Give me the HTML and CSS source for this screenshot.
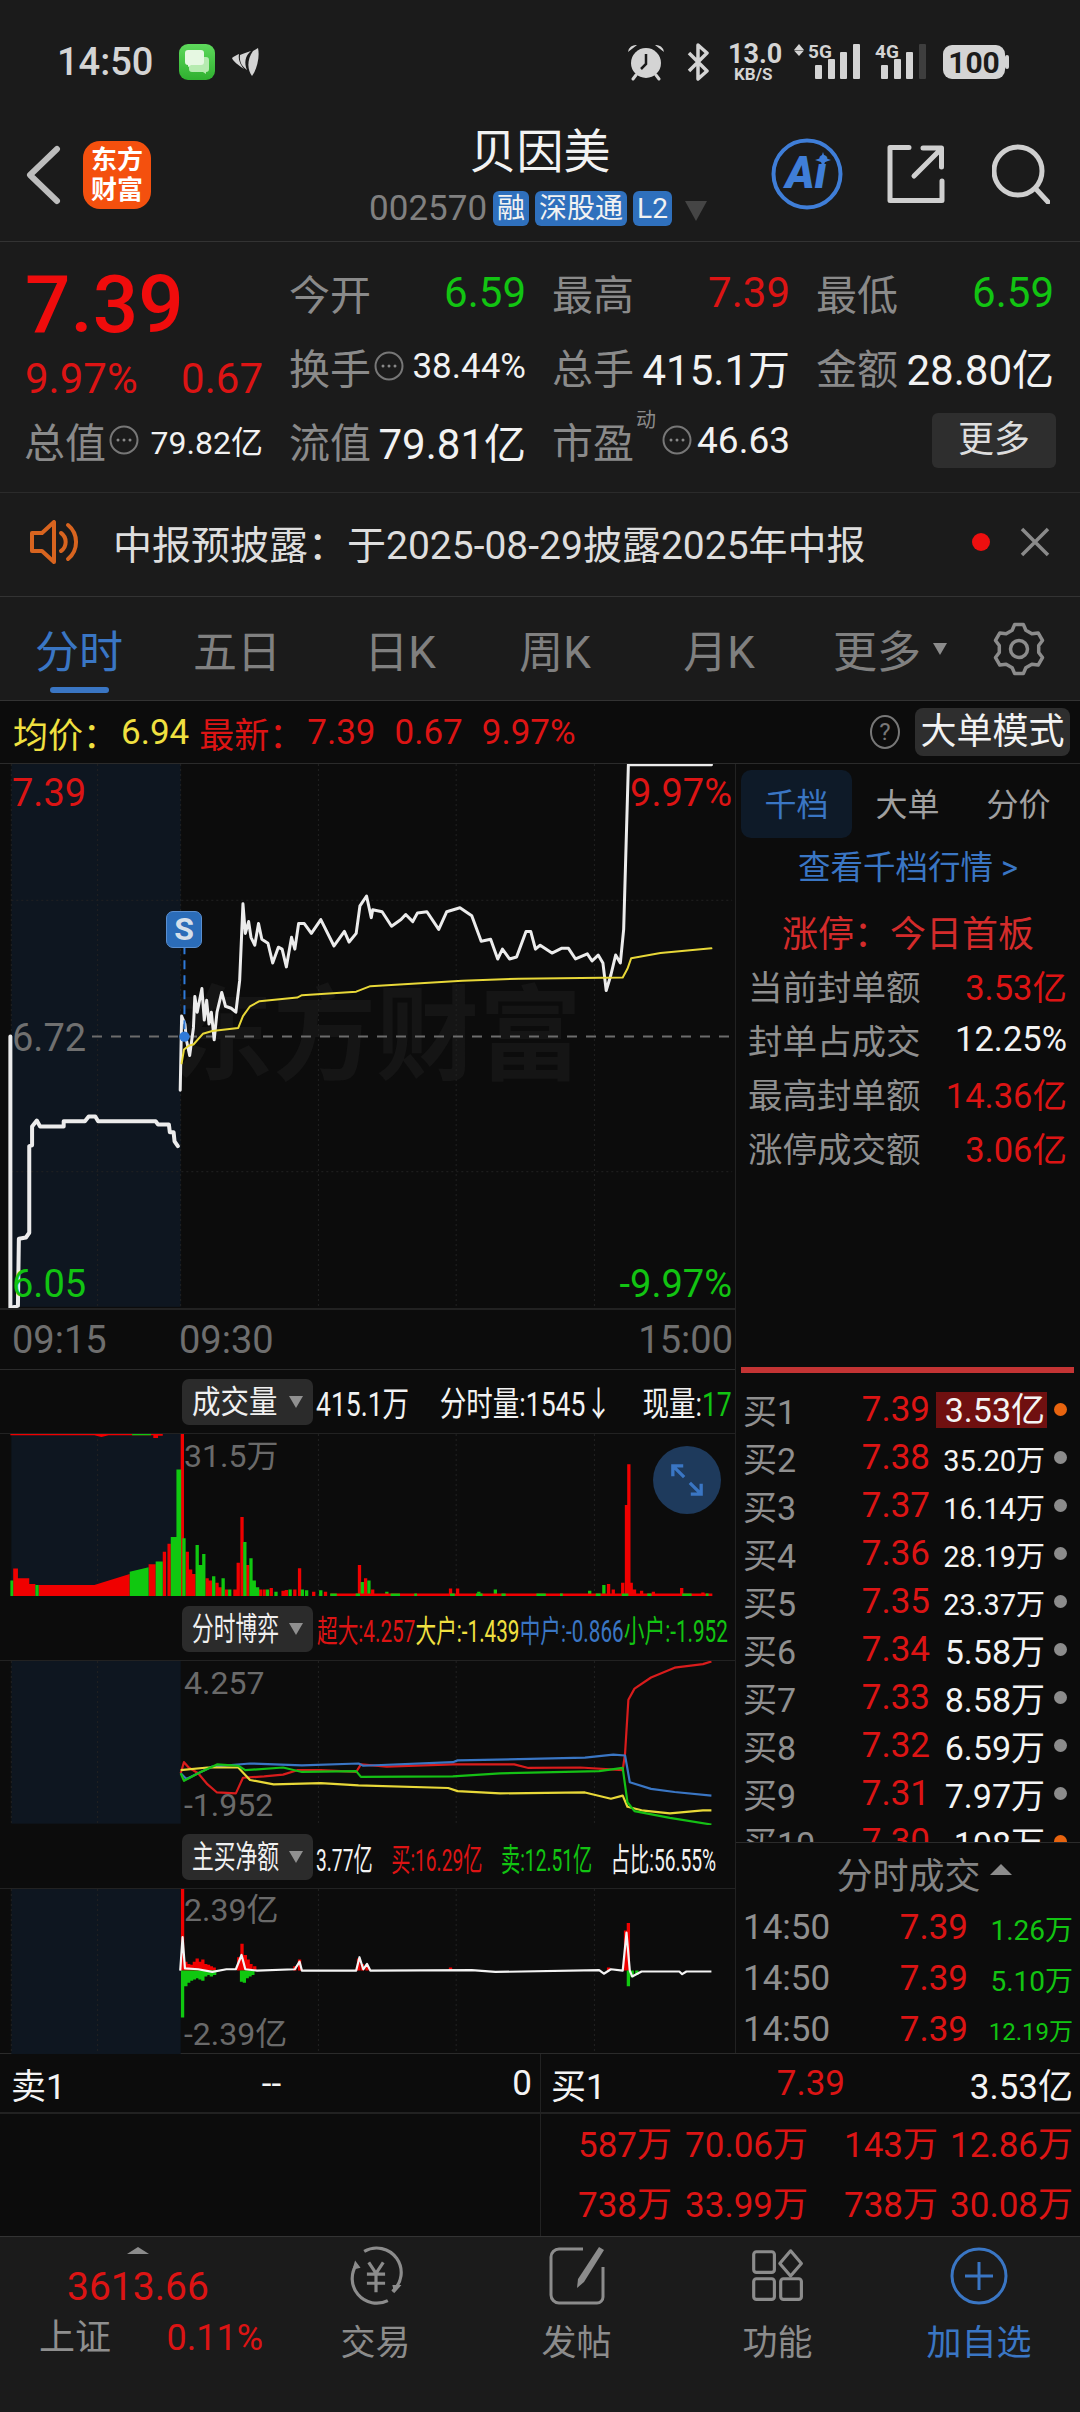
FILE: index.html
```html
<!DOCTYPE html>
<html lang="zh">
<head>
<meta charset="utf-8">
<title>贝因美</title>
<link rel="stylesheet" href="styles.css">
</head>
<body>
<div class="page">

<div class="status">
  <span class="clock">14:50</span>
  <svg class="ic-msg" viewBox="0 0 36 36"><defs><linearGradient id="g1" x1="0" y1="0" x2="0" y2="1"><stop offset="0" stop-color="#5ed95c"/><stop offset="1" stop-color="#2fb02f"/></linearGradient></defs><rect width="36" height="36" rx="9" fill="url(#g1)"/><path d="M13 13h14a3 3 0 0 1 3 3v9a3 3 0 0 1-3 3v2l-3-2H13a3 3 0 0 1-3-3v-9a3 3 0 0 1 3-3z" fill="#b6ebb0"/><path d="M9 6h13a3 3 0 0 1 3 3v9a3 3 0 0 1-3 3H12l-3 2v-2a3 3 0 0 1-3-3V9a3 3 0 0 1 3-3z" fill="#e6f8e2"/></svg>
  <svg class="ic-leaf" viewBox="0 0 27 30"><path d="M26 1C28 10 25 22 20 29 16 24 14 14 21 4z" fill="#d4d4d4"/><path d="M19 4C13 9 12 16 15 23 11 20 7 16 8 8 11 7 15 5 19 4z" fill="#d4d4d4"/><path d="M7 7C5 8 2 9 0 11 1 14 6 18 12 22 8 17 6 12 7 7z" fill="#d4d4d4"/></svg>
  <div class="status-right">
    <svg class="st-alarm" viewBox="0 0 59 38"><g fill="none" stroke="#d4d4d4" stroke-linecap="round"><path d="M6 36l3-4M32 36l-3-4" stroke-width="3"/></g><circle cx="19" cy="20" r="15" fill="#d4d4d4"/><path d="M19 11v10l-5 5" fill="none" stroke="#1b1b1b" stroke-width="2.500"/><path d="M1 9a8 8 0 0 1 9-7zM37 9a8 8 0 0 0-9-7z" fill="#d4d4d4"/></svg>
    <svg class="st-bt" viewBox="0 0 42 38"><path d="M3 10l18 18-9 8V2l9 8L3 28" fill="none" stroke="#d4d4d4" stroke-width="3.500" stroke-linejoin="round"/></svg>
    <svg class="st-net" viewBox="0 -8 66 54"><text x="0" y="20" class="t-net1">13.0</text><text x="6" y="37" class="t-net2">KB/S</text></svg>
    <svg class="st-s5" viewBox="0 -3 81 44"><path d="M5 1l5 6H0zM5 13L0 7.500h10z" fill="#d4d4d4"/><text x="14" y="15" class="t-sig">5G</text><g fill="#d4d4d4"><rect x="21" y="22" width="7" height="14" rx="1"/><rect x="34" y="16" width="7" height="20" rx="1"/><rect x="46" y="9" width="7" height="27" rx="1"/><rect x="59" y="1" width="7" height="35" rx="1"/></g></svg>
    <svg class="st-s4" viewBox="0 -3 68 44"><text x="0" y="15" class="t-sig">4G</text><g fill="#d4d4d4"><rect x="6" y="22" width="7" height="14" rx="1"/><rect x="19" y="16" width="7" height="20" rx="1"/><rect x="31" y="9" width="7" height="27" rx="1"/></g><rect x="44" y="1" width="7" height="35" rx="1" fill="#3e3e3e"/></svg>
    <svg class="st-batt" viewBox="0 0 66 36"><rect width="62" height="34" y="1" rx="9" fill="#d4d4d4"/><rect x="62" y="11" width="4" height="14" rx="2" fill="#d4d4d4"/><text x="31" y="29" class="t-batt">100</text></svg>
  </div>
</div>

<header class="header">
  <div class="header-left">
    <svg class="ic-back" viewBox="0 0 36 60"><path d="M32 4L5 30l27 26" fill="none" stroke="#bdbdbd" stroke-width="6" stroke-linecap="round" stroke-linejoin="round"/></svg>
    <div class="logo"><span>东方</span><span>财富</span></div>
  </div>
  <div class="title-block">
    <div class="title">贝因美</div>
    <div class="code-row">
      <span class="code">002570</span><span class="tag">融</span><span class="tag">深股通</span><span class="tag">L2</span><span class="code-tri"></span>
    </div>
  </div>
  <div class="header-right">
    <svg class="ic-ai" viewBox="0 0 72 72"><circle cx="36" cy="36" r="33.500" fill="none" stroke="#3f7ed8" stroke-width="4"/><text x="35" y="50" class="t-ai">Ai</text><path d="M52 14l2 6 6 2-6 2-2 6-2-6-6-2 6-2z" fill="#3f7ed8"/></svg>
    <svg class="ic-share" viewBox="0 0 58 58"><path d="M22 2.500H3v53h52V36M27 31L54 4M36 3h18.500v19" fill="none" stroke="#cfcfcf" stroke-width="5" stroke-linecap="round" stroke-linejoin="round"/></svg>
    <svg class="ic-search" viewBox="0 0 58 60"><circle cx="26" cy="27" r="24" fill="none" stroke="#cfcfcf" stroke-width="5"/><path d="M44 45l12 13" stroke="#cfcfcf" stroke-width="5" stroke-linecap="round"/></svg>
  </div>
</header>

<section class="quote">
  <div class="cell big-cell"><span class="big">7.39</span></div>
  <div class="cell"><span class="lab">今开</span><span class="val grn">6.59</span></div>
  <div class="cell"><span class="lab">最高</span><span class="val red">7.39</span></div>
  <div class="cell"><span class="lab">最低</span><span class="val grn">6.59</span></div>

  <div class="cell low-cell"><span class="val red">9.97%</span><span class="val red">0.67</span></div>
  <div class="cell"><span class="lab-wrap"><span class="lab">换手</span><svg class="dots" viewBox="0 0 30 30"><circle cx="15" cy="15" r="13.500" fill="none" stroke="#777" stroke-width="2"/><circle cx="9" cy="15" r="1.500" fill="#888"/><circle cx="15" cy="15" r="1.500" fill="#888"/><circle cx="21" cy="15" r="1.500" fill="#888"/></svg></span><span class="val wht s35">38.44%</span></div>
  <div class="cell"><span class="lab">总手</span><span class="val wht">415.1万</span></div>
  <div class="cell"><span class="lab">金额</span><span class="val wht">28.80亿</span></div>

  <div class="cell"><span class="lab-wrap"><span class="lab">总值</span><svg class="dots" viewBox="0 0 30 30"><circle cx="15" cy="15" r="13.500" fill="none" stroke="#777" stroke-width="2"/><circle cx="9" cy="15" r="1.500" fill="#888"/><circle cx="15" cy="15" r="1.500" fill="#888"/><circle cx="21" cy="15" r="1.500" fill="#888"/></svg></span><span class="val wht s32">79.82亿</span></div>
  <div class="cell"><span class="lab">流值</span><span class="val wht">79.81亿</span></div>
  <div class="cell"><span class="lab-wrap"><span class="lab">市盈</span><sup class="dong">动</sup><svg class="dots" viewBox="0 0 30 30"><circle cx="15" cy="15" r="13.500" fill="none" stroke="#777" stroke-width="2"/><circle cx="9" cy="15" r="1.500" fill="#888"/><circle cx="15" cy="15" r="1.500" fill="#888"/><circle cx="21" cy="15" r="1.500" fill="#888"/></svg></span><span class="val wht s37">46.63</span></div>
  <div class="cell end"><span class="more-btn">更多</span></div>
</section>

<section class="notice">
  <svg class="ic-speaker" viewBox="0 0 52 44"><path d="M24 2v40L12 31H2V13h10z" fill="none" stroke="#d8641f" stroke-width="4" stroke-linejoin="round"/><path d="M31 13a11 11 0 0 1 0 18M38 5a22 22 0 0 1 0 34" fill="none" stroke="#d8641f" stroke-width="4" stroke-linecap="round"/></svg>
  <span class="notice-text">中报预披露：于2025-08-29披露2025年中报</span>
  <span class="notice-dot"></span>
  <svg class="ic-x" viewBox="0 0 30 30"><path d="M2 2l26 26M28 2L2 28" stroke="#8a8a8a" stroke-width="3.500" fill="none"/></svg>
</section>

<nav class="tabs">
  <span class="tab active">分时</span>
  <span class="tab">五日</span>
  <span class="tab">日K</span>
  <span class="tab">周K</span>
  <span class="tab">月K</span>
  <span class="tab">更多<i class="tab-tri"></i></span>
  <svg class="ic-gear" viewBox="-28 -28 56 56"><path d="M-6.840-18.790L-4.340-24.620 4.340-24.620 6.840-18.790 12.860-15.320 19.150-16.070 23.490-8.550 19.700-3.470 19.700 3.470 23.490 8.550 19.150 16.070 12.860 15.320 6.840 18.790 4.340 24.620-4.340 24.620-6.840 18.790-12.860 15.320-19.150 16.070-23.490 8.550-19.700 3.470-19.700-3.470-23.490-8.550-19.150-16.070-12.860-15.320z" fill="none" stroke="#8c8c8c" stroke-width="3.500" stroke-linejoin="round"/><circle r="8.500" fill="none" stroke="#8c8c8c" stroke-width="3.500"/></svg>
</nav>

<section class="info">
  <span class="yel">均价：</span><span class="yel info-num">6.94</span>
  <span class="red info-new">最新：</span><span class="red info-num">7.39</span>
  <span class="red info-gap">0.67</span><span class="red info-gap">9.97%</span>
  <span class="help">?</span>
  <span class="mode-btn">大单模式</span>
</section>

<main class="body">
  <div class="left">
    <div class="chart price-chart">
      <div class="watermark">东方财富</div>
      <svg class="plot" viewBox="0 10 1558 1381" preserveAspectRatio="none">
        <rect x="24" y="10" width="359" height="1378" fill="#0e1620"/>
        <path class="grid-v" d="M207 10V1388M383 10V1388M675 10V1388M967 10V1388M1260 10V1388M24 10V702"/>
        <path class="grid-v" d="M24 356H1552M24 1045H1552"/>
        <path d="M195 702H1552" class="mid-dash"/>
        <path class="line w3" d="M22 702V1392L38 1385 40 1215 55 1212 62 1200V980L68 978V930L78 915 85 930H135V917H180L188 905H202L208 917H330L335 925H358L360 945H368L370 968 377 980"/>
        <path class="line w2" d="M382 838L385 650 392 670 395 710 402 750 410 680 413 600 418 640 428 580 433 660 438 610 443 670 448 640 454 710 460 640 470 590 478 625 490 630 500 640 508 560 515 365 520 440 527 410 532 450 540 470 548 415 555 455 568 465 578 515 590 475 598 480 607 525 618 450 625 480 633 415 645 415 660 440 680 405 708 472 730 435 740 462 755 440 763 370 777 345 787 400 790 380 810 385 830 422 850 405 860 392 875 410 885 388 905 385 930 430 947 385 975 375 1000 395 1020 460 1040 455 1055 505 1065 480 1080 505 1095 500 1115 435 1125 435 1135 480 1145 470 1170 490 1190 478 1205 478 1220 505 1245 492 1255 510 1268 495 1278 515 1285 585 1295 545 1305 495 1315 515 1322 430 1332 12H1508"/>
        <path class="line yellow" d="M385 770L390 735 400 725 410 722 430 695 450 688 505 680 515 650 530 625 550 612 630 603 640 597 755 588 785 574 980 560 1100 555 1320 552 1330 530 1338 503 1400 490 1508 478"/>
        <path d="M391 470V700" class="s-dash"/>
        <ellipse cx="391" cy="702" rx="11" ry="13" fill="#2f7ad8"/>
      </svg>
      <span class="lbl l-tl red">7.39</span>
      <span class="lbl l-ml gry">6.72</span>
      <span class="lbl l-bl grn">6.05</span>
      <span class="lbl l-tr red">9.97%</span>
      <span class="lbl l-br grn">-9.97%</span>
      <span class="s-mark">S</span>
    </div>
    <div class="time-axis"><span class="t-a">09:15</span><span class="t-b">09:30</span><span class="t-c">15:00</span></div>

    <div class="sec-head">
      <span class="sec-btn"><span class="btn-text n3">成交量</span><i class="btn-tri"></i></span>
      <div class="stat-line s1"><span>415.1万</span><span>分时量:1545↓</span><span>现量:<b class="grn">17</b></span></div>
    </div>
    <div class="chart vol-chart">
      <svg class="plot" viewBox="0 165 1558 367" preserveAspectRatio="none">
        <rect x="24" y="165" width="359" height="365" fill="#0e1620"/>
        <path class="grid-v" d="M207 165V530M675 165V530M967 165V530M1260 165V530"/>
        <path fill="#f00000" d="M28 530V468H38V490H62V503H75V530ZM82 530V505H200L275 480V530ZM315 530V458H330V530ZM345 530V430H352V530ZM355 530V412H362V530ZM383 530V165H390V530ZM22 165H345V169H335V174H325V168H230L215 172 200 168H22Z"/>
        <path fill="#10c810" d="M22 530V495H28V530ZM75 530V505H82V530ZM275 530V475L315 465V530ZM330 530V452H345V530ZM362 530V397H374V530ZM374 530V245H384V530ZM280 165H320V168H280Z"/>
        <path class="vb-r" d="M397 530V430M404 530V470M411 530V480M439 530V490M446 530V495M460 530V500M467 530V510M480 530V515M498 530V515M505 530V455M513 530V352M525 530V460M552 530V515M560 530V515M575 530V512M600 530V518M607 530V516M625 530V515M635 530V467M665 530V520M690 530V520M762 530V460M775 530V490M790 530V515M955 530V513M970 530V513M1290 530V503M1300 530V515M1320 530V500M1328 530V325M1333 530V233M1338 530V500M1345 530V515M1360 530V518M1385 530V520M1445 530V512M1490 530V522"/>
        <path class="vb-g" d="M390 530V400M418 530V415M425 530V460M432 530V435M453 530V485M473 530V490M487 530V515M519 530V408M532 530V445M539 530V495M546 530V510M567 530V515M585 530V520M615 530V515M641 530V515M650 530V517M680 530V517M768 530V498M782 530V495M820 530V520M1015 530V520M1050 530V515M1250 530V518M1280 530V505"/>
        <path d="M700 527H1510" stroke="#f00000" stroke-width="6" fill="none"/>
        <path d="M700 527H1510" stroke="#10c810" stroke-width="6" fill="none" stroke-dasharray="14 40 9 65 20 30 6 70 10 45"/>
      </svg>
      <span class="lbl l-y v-top gry2">31.5万</span>
      <span class="expand"><svg viewBox="0 0 36 36"><path d="M3 14V3h11M3 3l12 12M33 22v11H22M33 33L21 21" fill="none" stroke="#3a76c4" stroke-width="3.500"/></svg></span>
    </div>

    <div class="sec-head">
      <span class="sec-btn"><span class="btn-text n4">分时博弈</span><i class="btn-tri"></i></span>
      <div class="stat-line s2"><span class="red">超大:4.257</span><span class="yel">大户:-1.439</span><span class="blu">中户:-0.866</span><span class="grn">小户:-1.952</span></div>
    </div>
    <div class="chart game-chart">
      <svg class="plot" viewBox="0 673 1558 368" preserveAspectRatio="none">
        <rect x="24" y="673" width="359" height="365" fill="#0e1620"/>
        <path class="grid-v" d="M207 673V1038M675 673V1038M967 673V1038M1260 673V1038M24 673V1038"/>
        <path class="thin" stroke="#d91c1c" d="M383 925L390 900 400 912 420 925 440 950 460 968 500 970 515 935 560 932 600 928 630 918 680 918 755 922 765 905 820 910 960 905 1090 905 1120 913 1230 912 1320 918 1325 880 1332 760 1345 735 1380 710 1430 688 1490 680 1508 674"/>
        <path class="thin" stroke="#3a76c4" d="M383 925L395 938 420 925 450 910 530 903 640 907 760 903 770 908 960 900 970 896 1240 890 1300 883 1325 885 1335 945 1380 960 1430 967 1508 975"/>
        <path class="thin" stroke="#e8d838" d="M383 918L440 912 505 912 530 940 580 950 680 947 760 952 950 958 970 965 1060 970 1240 968 1295 982 1320 975 1330 1000 1360 1008 1420 1015 1490 1008 1508 1008"/>
        <path class="thin" stroke="#15c015" d="M383 925L390 942 420 925 460 905 505 908 520 918 600 912 640 922 755 920 765 933 960 932 1060 925 1270 920 1320 913 1330 990 1345 1010 1420 1025 1508 1040"/>
      </svg>
      <span class="lbl l-y g-top gry2">4.257</span>
      <span class="lbl l-y g-bot gry2">-1.952</span>
    </div>

    <div class="sec-head">
      <span class="sec-btn"><span class="btn-text n4">主买净额</span><i class="btn-tri"></i></span>
      <div class="stat-line s3"><span>3.77亿</span><span class="red">买:16.29亿</span><span class="grn">卖:12.51亿</span><span>占比:56.55%</span></div>
    </div>
    <div class="chart net-chart">
      <svg class="plot" viewBox="0 1182 1558 370" preserveAspectRatio="none">
        <rect x="24" y="1182" width="359" height="370" fill="#0e1620"/>
        <path class="grid-v" d="M207 1182V1552M675 1182V1552M967 1182V1552M1260 1182V1552M24 1182V1552"/>
        <path class="nb-r" d="M387 1365V1182M394 1365V1345M400 1365V1350M406 1365V1352M412 1365V1345M418 1365V1338M424 1365V1345M430 1365V1340M436 1365V1350M442 1365V1352M448 1365V1355M454 1365V1358M506 1365V1335M513 1365V1305M520 1365V1330M526 1365V1340M532 1365V1350M540 1365V1355M625 1365V1355M635 1365V1340M760 1365V1338M768 1365V1350M778 1365V1352M955 1365V1358M1290 1365V1358M1326 1365V1275M1332 1365V1258"/>
        <path class="nb-g" d="M387 1365V1470M394 1365V1400M400 1365V1392M406 1365V1388M412 1365V1385M418 1365V1382M424 1365V1385M430 1365V1388M436 1365V1378M442 1365V1375M448 1365V1378M455 1365V1375M512 1365V1390M518 1365V1392M524 1365V1382M530 1365V1378M536 1365V1375M1332 1365V1400M1340 1365V1380M1350 1365V1375"/>
        <path class="thin" stroke="#f4f4f4" d="M382 1365L387 1290 392 1360 420 1362 450 1368 480 1362 500 1362 512 1330 520 1362 545 1365 625 1362 635 1345 640 1365 755 1365 762 1335 770 1362 778 1350 785 1365 1000 1364 1050 1368 1270 1364 1280 1372 1295 1362 1320 1365 1328 1280 1335 1365 1340 1378 1360 1367 1440 1367 1446 1373 1455 1367 1508 1367"/>
      </svg>
      <span class="lbl l-y n-top gry2">2.39亿</span>
      <span class="lbl l-y n-bot gry2">-2.39亿</span>
    </div>
  </div>

  <aside class="right">
    <div class="r-tabs"><span class="r-tab active">千档</span><span class="r-tab">大单</span><span class="r-tab">分价</span></div>
    <div class="r-link">查看千档行情 &gt;</div>
    <div class="r-limit">涨停：今日首板</div>
    <div class="r-stat"><span class="gry3">当前封单额</span><span class="red">3.53亿</span></div>
    <div class="r-stat"><span class="gry3">封单占成交</span><span class="wht">12.25%</span></div>
    <div class="r-stat"><span class="gry3">最高封单额</span><span class="red">14.36亿</span></div>
    <div class="r-stat"><span class="gry3">涨停成交额</span><span class="red">3.06亿</span></div>
    <div class="r-bar"></div>
    <div class="orders">
      <div class="order"><span class="gry3">买1</span><span class="red o-p">7.39</span><span class="o-a hl">3.53亿</span><i class="dot org"></i></div>
      <div class="order"><span class="gry3">买2</span><span class="red o-p">7.38</span><span class="o-a sm">35.20万</span><i class="dot"></i></div>
      <div class="order"><span class="gry3">买3</span><span class="red o-p">7.37</span><span class="o-a sm">16.14万</span><i class="dot"></i></div>
      <div class="order"><span class="gry3">买4</span><span class="red o-p">7.36</span><span class="o-a sm">28.19万</span><i class="dot"></i></div>
      <div class="order"><span class="gry3">买5</span><span class="red o-p">7.35</span><span class="o-a sm">23.37万</span><i class="dot"></i></div>
      <div class="order"><span class="gry3">买6</span><span class="red o-p">7.34</span><span class="o-a">5.58万</span><i class="dot"></i></div>
      <div class="order"><span class="gry3">买7</span><span class="red o-p">7.33</span><span class="o-a">8.58万</span><i class="dot"></i></div>
      <div class="order"><span class="gry3">买8</span><span class="red o-p">7.32</span><span class="o-a">6.59万</span><i class="dot"></i></div>
      <div class="order"><span class="gry3">买9</span><span class="red o-p">7.31</span><span class="o-a">7.97万</span><i class="dot"></i></div>
      <div class="order"><span class="gry3">买10</span><span class="red o-p">7.30</span><span class="o-a">108万</span><i class="dot org"></i></div>
    </div>
    <div class="trades-head">分时成交<i class="up-tri"></i></div>
    <div class="trade"><span class="gry3">14:50</span><span class="red tr-p">7.39</span><span class="grn tr-v">1.26万</span></div>
    <div class="trade"><span class="gry3">14:50</span><span class="red tr-p">7.39</span><span class="grn tr-v">5.10万</span></div>
    <div class="trade"><span class="gry3">14:50</span><span class="red tr-p">7.39</span><span class="grn tr-v small">12.19万</span></div>
  </aside>
</main>

<section class="book">
  <div class="book-row1 b-left"><span>卖1</span><span class="c">--</span><span class="r">0</span></div>
  <div class="book-row1 b-right"><span>买1</span><span class="red r">7.39</span><span class="r">3.53亿</span></div>
  <div class="book-empty"></div>
  <div class="book-depth">
    <span>587万</span><span>70.06万</span><span>143万</span><span>12.86万</span>
    <span>738万</span><span>33.99万</span><span>738万</span><span>30.08万</span>
  </div>
</section>

<footer class="bar">
  <div class="idx">
    <i class="idx-tri"></i>
    <div class="idx-val red">3613.66</div>
    <div class="idx-sub"><span class="gry3">上证</span><span class="red">0.11%</span></div>
  </div>
  <div class="bar-item">
    <svg viewBox="0 0 66 60"><path d="M20 3A27 27 0 0 1 51 47M46 57A27 27 0 0 1 12 17" fill="none" stroke="#8c8c8c" stroke-width="3.500"/><path d="M7 23l3-10 6 8zM51 40l10 0-8 9z" fill="#8c8c8c"/><path d="M25 15l8 12 8-12M23 28h20M23 38h20M33 27v21" fill="none" stroke="#8c8c8c" stroke-width="3.500"/></svg>
    <span>交易</span>
  </div>
  <div class="bar-item">
    <svg viewBox="0 0 60 60"><path d="M36 3H12a8 8 0 0 0-8 8v38a8 8 0 0 0 8 8h38a6 6 0 0 0 6-6V21" fill="none" stroke="#8c8c8c" stroke-width="3"/><path d="M52 1l5 3-20 32-7 6 1-9z" fill="#8c8c8c"/></svg>
    <span>发帖</span>
  </div>
  <div class="bar-item">
    <svg class="ic-fn" viewBox="0 0 60 60"><g fill="none" stroke="#8c8c8c" stroke-width="3.500"><rect x="3" y="3" width="23" height="23" rx="3"/><rect x="3" y="33" width="23" height="23" rx="3"/><rect x="33" y="33" width="23" height="23" rx="3"/><path d="M44 2l12 14-12 14-12-14z" stroke-linejoin="round"/></g></svg>
    <span>功能</span>
  </div>
  <div class="bar-item blue">
    <svg viewBox="0 0 60 60"><circle cx="30" cy="30" r="27" fill="none" stroke="#3a76c4" stroke-width="3"/><path d="M16 30h28M30 16v28" stroke="#3a76c4" stroke-width="3"/></svg>
    <span>加自选</span>
  </div>
</footer>

</div>
</body>
</html>
```

FILE: styles.css
```css
* { box-sizing: border-box; }
html, body { margin: 0; padding: 0; }
body { background: #1b1b1b; font-family: Roboto, "Noto Sans CJK SC", sans-serif; color: #fff; }
.page { width: 1080px; height: 2412px; overflow: hidden; background: #1b1b1b; }
i { display: block; font-style: normal; }

.red { color: #dc1414; }
.grn { color: #12c412; }
.wht { color: #f2f2f2; }
.yel { color: #f0e040; }
.blu { color: #3a76c4; }
.gry { color: #707070; }
.gry2 { color: #6a6a6a; }
.gry3 { color: #8f8f8f; }

/* status bar */
.status { height: 124px; display: flex; align-items: center; padding: 0 71px 0 57px; }
.clock { font-size: 38px; font-weight: 500; color: #d4d4d4; }
.ic-msg { width: 36px; height: 36px; margin-left: 26px; }
.ic-leaf { width: 27px; height: 30px; margin-left: 17px; }
.status-right { margin-left: auto; display: flex; align-items: center; }
.st-alarm { width: 59px; height: 38px; }
.st-bt { width: 42px; height: 38px; }
.st-net { width: 66px; height: 54px; margin: -8px 0; }
.st-s5 { width: 81px; height: 44px; margin: -3px 0; }
.st-s4 { width: 68px; height: 44px; margin: -3px 0; }
.st-batt { width: 66px; height: 36px; }
.t-net1 { font: 700 27px Roboto, sans-serif; fill: #d4d4d4; }
.t-net2 { font: 700 17px Roboto, sans-serif; fill: #d4d4d4; }
.t-sig { font: 700 19px Roboto, sans-serif; fill: #d4d4d4; }
.t-batt { font: 700 30px Roboto, sans-serif; fill: #1b1b1b; text-anchor: middle; }

/* header */
.header { height: 118px; border-bottom: 1px solid #333; display: grid; grid-template-columns: 1fr auto 1fr; align-items: start; }
.header-left { display: flex; align-items: center; padding: 17px 0 0 25px; }
.ic-back { width: 36px; height: 60px; }
.logo { width: 68px; height: 68px; margin-left: 22px; border-radius: 17px; background: #f4500e; display: flex; flex-direction: column; align-items: center; justify-content: center; font-size: 26px; font-weight: 700; line-height: 30px; }
.title-block { display: flex; flex-direction: column; align-items: center; }
.title { font-size: 47px; line-height: 56px; color: #f2f2f2; }
.code-row { display: flex; align-items: center; gap: 6px; margin-top: 11px; margin-left: -4px; }
.code { font-size: 35px; line-height: 35px; color: #808080; }
.tag { height: 35px; line-height: 35px; padding: 0 4px; border-radius: 6px; background: #2f70bd; font-size: 28px; color: #f2f2f2; }
.code-tri { width: 0; height: 0; margin: 5px 0 0 7px; border-left: 11px solid transparent; border-right: 11px solid transparent; border-top: 20px solid #454545; }
.header-right { display: flex; justify-content: flex-end; align-items: center; padding: 14px 30px 0 0; }
.ic-ai { width: 72px; height: 72px; }
.ic-share { width: 58px; height: 58px; margin-left: 44px; }
.ic-search { width: 58px; height: 60px; margin-left: 47px; }
.t-ai { font: italic 900 44px Roboto, sans-serif; fill: #3f7ed8; text-anchor: middle; }

/* quote grid */
.quote { height: 251px; padding: 13px 26px 0 25px; border-bottom: 1px solid #2b2b2b; display: grid; grid-template-columns: 238px 236px 237px 237px; grid-auto-rows: 74px; column-gap: 27px; }
.cell { display: flex; align-items: center; justify-content: space-between; }
.cell.end { justify-content: flex-end; }
.big-cell { align-items: flex-start; }
.big { font-size: 80px; font-weight: 500; color: #f00c0c; line-height: 64px; margin-top: 18px; }
.low-cell { padding-top: 24px; }
.lab { font-size: 41px; color: #8a8a8a; margin-left: -1px; }
.lab-wrap { display: flex; align-items: center; position: relative; }
.val { font-size: 42px; }
.s35 { font-size: 35px; }
.s32 { font-size: 32px; }
.s37 { font-size: 37px; }
.dots { width: 30px; height: 30px; margin-left: 3px; }
.dong { font-size: 20px; line-height: 20px; color: #8a8a8a; align-self: flex-start; margin: 0 3px 0 2px; width: 20px; }
.more-btn { width: 124px; height: 55px; background: #2e2e2e; border-radius: 6px; font-size: 36px; color: #ddd; text-align: center; line-height: 55px; margin-right: -2px; }

/* notice */
.notice { height: 104px; border-bottom: 1px solid #333; display: flex; align-items: center; padding: 0 30px 6px; }
.ic-speaker { width: 52px; height: 44px; }
.notice-text { font-size: 39px; color: #dedede; margin-left: 31px; }
.notice-dot { width: 18px; height: 18px; border-radius: 50%; background: #ee0f0f; margin-left: auto; }
.ic-x { width: 30px; height: 30px; margin-left: 30px; }

/* tabs */
.tabs { height: 104px; border-bottom: 1px solid #333; display: grid; grid-template-columns: 158px 158px 168px 142px 186px 156px 102px; align-items: center; }
.tab { font-size: 44px; color: #808080; text-align: center; position: relative; display: flex; justify-content: center; align-items: center; }
.tab.active { color: #3a76c4; }
.tab.active::after { content: ""; position: absolute; left: 50px; width: 59px; height: 6px; border-radius: 3px; background: #3a76c4; bottom: -12px; }
.tab-tri { width: 0; height: 0; margin-left: 12px; border-left: 7px solid transparent; border-right: 7px solid transparent; border-top: 12px solid #8c8c8c; }
.ic-gear { width: 56px; height: 56px; justify-self: center; }

/* info strip */
.info { height: 63px; background: #0c0c0c; border-bottom: 1px solid #2b2b2b; display: flex; align-items: center; padding: 0 10px 0 13px; font-size: 35px; }
.info-num { margin-left: 3px; }
.info-new { margin-left: 10px; }
.info-gap { margin-left: 19px; }
.help { margin-left: auto; width: 30px; height: 34px; border: 2px solid #777; border-radius: 50%; color: #777; font-size: 24px; line-height: 30px; text-align: center; }
.mode-btn { margin-left: 15px; width: 155px; height: 48px; background: #2e2e2e; border-radius: 8px; font-size: 36px; line-height: 48px; text-align: center; color: #f2f2f2; }

/* main */
.body { height: 1290px; background: #0c0c0c; display: flex; border-bottom: 1px solid #2b2b2b; }
.left { width: 736px; border-right: 1px solid #222; flex: none; }
.chart { position: relative; }
.plot { display: block; width: 735px; height: 100%; position: relative; }
.price-chart { height: 546px; border-bottom: 2px solid #222; }
.watermark { position: absolute; left: 170px; top: 210px; font-size: 103px; line-height: 125px; font-weight: 700; color: #151515; white-space: nowrap; }
.grid-v { fill: none; stroke: #222; stroke-width: 1; stroke-dasharray: 2 3; vector-effect: non-scaling-stroke; }
.mid-dash { stroke: #6c6c6c; stroke-width: 2; stroke-dasharray: 10 9; fill: none; vector-effect: non-scaling-stroke; }
.line { fill: none; stroke: #ececec; stroke-linejoin: round; stroke-linecap: round; vector-effect: non-scaling-stroke; }
.w3 { stroke-width: 4px; }
.w2 { stroke-width: 3px; }
.yellow { stroke: #e8d838; stroke-width: 2px; }
.s-dash { stroke: #2f7ad8; stroke-width: 2; stroke-dasharray: 9 6; fill: none; vector-effect: non-scaling-stroke; }
.thin { fill: none; stroke-width: 2.2px; stroke-linejoin: round; vector-effect: non-scaling-stroke; }
.vb-r, .nb-r { fill: none; stroke: #f00000; stroke-width: 7; }
.vb-g, .nb-g { fill: none; stroke: #10c810; stroke-width: 7; }
.lbl { position: absolute; font-size: 38px; line-height: 44px; white-space: nowrap; }
.l-tl { left: 12px; top: 7px; }
.l-ml { left: 12px; top: 252px; }
.l-bl { left: 12px; top: 498px; }
.l-tr { right: 3px; top: 7px; }
.l-br { right: 3px; top: 498px; }
.s-mark { position: absolute; left: 166px; top: 147px; width: 36px; height: 37px; border-radius: 7px; background: #2b6cb8; border: 1px solid #5a8fd0; color: #d5dfea; font-size: 32px; font-weight: 700; line-height: 35px; text-align: center; }
.time-axis { height: 60px; border-bottom: 1px solid #2b2b2b; display: grid; grid-template-columns: 179px 1fr auto; align-items: center; padding: 0 2px 0 12px; font-size: 38px; color: #6e6e6e; }
.t-a, .t-b, .t-c { white-space: nowrap; }
.t-b { margin-left: -12px; }

.sec-head { height: 64px; border-bottom: 1px solid #222; display: flex; align-items: center; padding-left: 182px; }
.sec-btn { width: 131px; height: 46px; flex: none; background: #2b2b2b; border-radius: 7px; display: flex; align-items: center; padding-left: 10px; }
.btn-text { font-size: 32px; line-height: 46px; color: #f0f0f0; white-space: nowrap; transform-origin: left center; display: inline-block; width: 90px; }
.btn-text.n3 { transform: scaleX(.89); }
.btn-text.n4 { transform: scaleX(.68); }
.btn-tri { width: 0; height: 0; margin-left: 7px; border-left: 7px solid transparent; border-right: 7px solid transparent; border-top: 12px solid #909090; }
.stat-line { display: flex; justify-content: space-between; white-space: nowrap; transform-origin: left center; margin-left: 3px; flex: none; color: #f2f2f2; }
.stat-line b { font-weight: 400; }
.stat-line.s1 { width: 533px; font-size: 34px; transform: scaleX(.78); }
.stat-line.s2 { width: 616px; font-size: 31px; transform: scaleX(.667); margin-left: 4px; }
.stat-line.s3 { width: 667px; font-size: 32px; transform: scaleX(.6); }
.vol-chart { height: 163px; }
.game-chart { height: 164px; }
.net-chart { height: 165px; }
.l-y { font-size: 32px; line-height: 40px; left: 184px; }
.v-top { top: 2px; }
.g-top { top: 2px; }
.g-bot { top: 124px; }
.n-top { top: 1px; }
.n-bot { top: 125px; }
.expand { position: absolute; left: 653px; top: 12px; width: 68px; height: 68px; border-radius: 50%; background: #1e3a5c; display: flex; align-items: center; justify-content: center; }
.expand svg { width: 34px; height: 34px; }

/* right */
.right { width: 344px; flex: none; padding-top: 6px; overflow: hidden; display: flex; flex-direction: column; }
.r-tabs { display: grid; grid-template-columns: repeat(3, 111px); margin-left: 5px; height: 65px; flex: none; }
.r-tab { font-size: 32px; line-height: 65px; padding-top: 3px; text-align: center; color: #a0a0a0; }
.r-tab.active { background: #0e1a28; color: #3a76c4; border-radius: 10px; }
.r-link { height: 58px; flex: none; margin-top: 4px; line-height: 58px; text-align: center; font-size: 32.500px; color: #3a76c4; white-space: nowrap; }
.r-limit { height: 48px; flex: none; margin-top: 13px; line-height: 50px; text-align: center; font-size: 36px; color: #d42b2b; white-space: nowrap; }
.r-stat { height: 54px; flex: none; display: flex; justify-content: space-between; align-items: center; padding: 0 13px 0 12px; font-size: 34.500px; white-space: nowrap; }
.r-bar { flex: none; margin: 193px 6px 0 5px; height: 6px; background: #c43434; }
.orders { height: 470px; flex: none; padding-top: 12px; overflow: hidden; border-bottom: 1px solid #2b2b2b; }
.order { height: 48px; display: grid; grid-template-columns: 87px 100px 117px 20px; align-items: center; padding-left: 7px; font-size: 34px; white-space: nowrap; }
.o-p { text-align: right; font-size: 35px; }
.o-a { text-align: right; color: #f4f4f4; padding-right: 2px; }
.o-a.sm { font-size: 29px; }
.o-a.hl { justify-self: end; width: 111px; height: 36px; line-height: 36px; background: #701010; }
.dot { width: 13px; height: 13px; border-radius: 50%; background: #8c8c8c; justify-self: end; }
.dot.org { background: #e8640f; }
.trades-head { height: 59px; flex: none; display: flex; align-items: center; justify-content: center; padding-left: 32px; font-size: 36px; color: #848484; }
.up-tri { width: 0; height: 0; margin-left: 9px; margin-bottom: 6px; border-left: 11px solid transparent; border-right: 11px solid transparent; border-bottom: 11px solid #8c8c8c; }
.trade { height: 51px; flex: none; display: grid; grid-template-columns: 120px 105px 1fr; align-items: center; padding: 0 7px; font-size: 35px; white-space: nowrap; }
.tr-p { text-align: right; }
.tr-v { font-size: 28px; text-align: right; }
.tr-v.small { font-size: 24px; }

/* book */
.book { height: 183px; background: #0c0c0c; border-bottom: 1px solid #333; display: grid; grid-template-columns: 541px 539px; grid-template-rows: 60px 122px; font-size: 35px; color: #f4f4f4; white-space: nowrap; }
.book-row1 { border-bottom: 2px solid #222; display: grid; align-items: center; }
.b-left { grid-template-columns: 1fr 1fr 1fr; padding: 0 8px 0 11px; border-right: 1px solid #222; }
.b-right { grid-template-columns: 64px 230px 1fr; padding: 0 7px 0 10px; }
.c { text-align: center; }
.r { text-align: right; }
.book-empty { border-right: 1px solid #222; }
.book-depth { display: grid; grid-template-columns: 131px 136px 130px 135px; grid-auto-rows: 60px; align-items: center; text-align: right; color: #dc1414; margin-top: -3px; }

/* bottom bar */
.bar { height: 175px; display: grid; grid-template-columns: 275px 201px 201px 201px 202px; align-items: start; }
.idx { position: relative; padding-top: 26px; display: flex; flex-direction: column; align-items: flex-start; }
.idx-tri { position: absolute; left: 127px; top: 10px; width: 0; height: 0; border-left: 11px solid transparent; border-right: 11px solid transparent; border-bottom: 7px solid #8c8c8c; }
.idx-val { font-size: 39px; line-height: 48px; margin-left: 67px; }
.idx-sub { display: flex; justify-content: space-between; font-size: 36px; line-height: 50px; width: 224px; margin: 2px 0 0 39px; }
.bar-item { display: flex; flex-direction: column; align-items: center; padding-top: 9px; font-size: 35px; color: #8c8c8c; }
.bar-item svg { width: 60px; height: 60px; }
.bar-item svg.ic-fn { width: 54px; }
.bar-item span { line-height: 48px; margin-top: 14px; white-space: nowrap; }
.bar-item.blue { color: #3a76c4; }
```
